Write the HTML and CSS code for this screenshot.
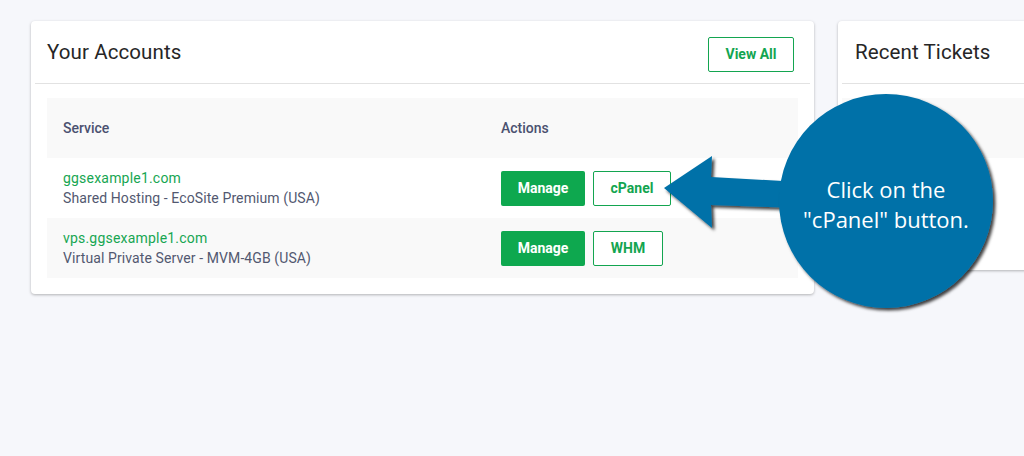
FILE: index.html
```html
<!DOCTYPE html>
<html>
<head>
<meta charset="utf-8">
<link rel="stylesheet" href="styles.css">
</head>
<body>
<div class="page">
  <section class="card accounts">
    <div class="card-header">
      <h2 class="card-title">Your Accounts</h2>
      <a class="btn btn-outline view-all">View All</a>
    </div>
    <div class="table">
      <div class="row head">
        <div class="cell service">Service</div>
        <div class="cell actions">Actions</div>
      </div>
      <div class="row">
        <div class="cell service">
          <a class="domain">ggsexample1.com</a>
          <div class="plan">Shared Hosting - EcoSite Premium (USA)</div>
        </div>
        <div class="cell actions">
          <a class="btn btn-solid manage">Manage</a>
          <a class="btn btn-outline cpanel">cPanel</a>
        </div>
      </div>
      <div class="row alt">
        <div class="cell service">
          <a class="domain">vps.ggsexample1.com</a>
          <div class="plan">Virtual Private Server - MVM-4GB (USA)</div>
        </div>
        <div class="cell actions">
          <a class="btn btn-solid manage">Manage</a>
          <a class="btn btn-outline whm">WHM</a>
        </div>
      </div>
    </div>
  </section>
  <section class="card tickets">
    <div class="card-header">
      <h2 class="card-title">Recent Tickets</h2>
    </div>
    <div class="tickets-head"></div>
  </section>
</div>

<div class="callout">
  <svg class="callout-art" width="1024" height="456" viewBox="0 0 1024 456">
    <defs>
      <filter id="sh" x="-20%" y="-20%" width="140%" height="140%">
        <feDropShadow dx="2.5" dy="2.5" stdDeviation="1.6" flood-color="#000" flood-opacity="0.75"/>
      </filter>
    </defs>
    <polygon filter="url(#sh)" fill="#0071a8" points="664,188 712,156 711,177 800,182 800,208 711,205 712,228"/>
    <circle filter="url(#sh)" fill="#0071a8" cx="886" cy="201" r="107"/>
  </svg>
  <div class="callout-text">Click on the<br>"cPanel" button.</div>
</div>
</body>
</html>
```

FILE: styles.css
```css
* { box-sizing: border-box; }
html, body { margin: 0; padding: 0; }
body {
  background: #f6f7fb;
  font-family: Roboto, "Liberation Sans", sans-serif;
  width: 1024px;
  height: 456px;
  overflow: hidden;
  position: relative;
}
.page {
  display: flex;
  gap: 24px;
  padding: 21px 0 0 31px;
  align-items: flex-start;
}
.card {
  background: #fff;
  border-radius: 4px;
  box-shadow: 0 1px 3px rgba(0,0,0,0.28);
  flex-shrink: 0;
}
.accounts { width: 783px; height: 273px; }
.tickets { width: 220px; height: 249px; }
.card-header {
  height: 63px;
  margin: 0 4px;
  padding: 0 16px 0 12px;
  border-bottom: 1px solid #e2e2e2;
  display: flex;
  align-items: center;
  justify-content: space-between;
}
.tickets .card-header { padding-left: 13px; }
.card-title {
  margin: 0;
  font-size: 20.5px;
  font-weight: 400;
  color: #262626;
  letter-spacing: 0.1px;
}
.btn {
  display: inline-flex;
  align-items: center;
  justify-content: center;
  height: 35px;
  font-size: 14px;
  font-weight: 700;
  border-radius: 2px;
}
.btn-outline {
  border: 1px solid #13a550;
  color: #13a550;
  background: #fff;
}
.btn-solid {
  background: #0ea84f;
  color: #fff;
}
.view-all { width: 86px; margin-top: 4px; }
.table { margin: 14px 16px 0 16px; }
.row {
  display: grid;
  grid-template-columns: 454px 1fr;
  height: 60px;
  align-items: center;
}
.row.head, .row.alt { background: #f9f9f9; }
.head .cell {
  font-size: 14px;
  font-weight: 500;
  color: #4b5170;
}
.cell.service { padding-left: 16px; }
.domain {
  display: block;
  color: #17a652;
  font-size: 14px;
  line-height: 20px;
  letter-spacing: 0.2px;
}
.plan {
  color: #525870;
  font-size: 14px;
  line-height: 20px;
  letter-spacing: 0.1px;
}
.cell.actions { display: flex; gap: 8px; }
.manage { width: 84px; }
.cpanel { width: 78px; }
.whm { width: 70px; }
.tickets-head {
  margin: 14px 0 0 4px;
  height: 60px;
  background: #f9f9f9;
}
.callout {
  position: absolute;
  left: 0;
  top: 0;
  width: 1024px;
  height: 456px;
  pointer-events: none;
}
.callout-art { position: absolute; left: 0; top: 0; }
.callout-text {
  position: absolute;
  left: 786px;
  top: 174px;
  width: 200px;
  text-align: center;
  color: #fff;
  font-family: "Open Sans", "Liberation Sans", sans-serif;
  font-size: 22px;
  line-height: 30px;
}
```
